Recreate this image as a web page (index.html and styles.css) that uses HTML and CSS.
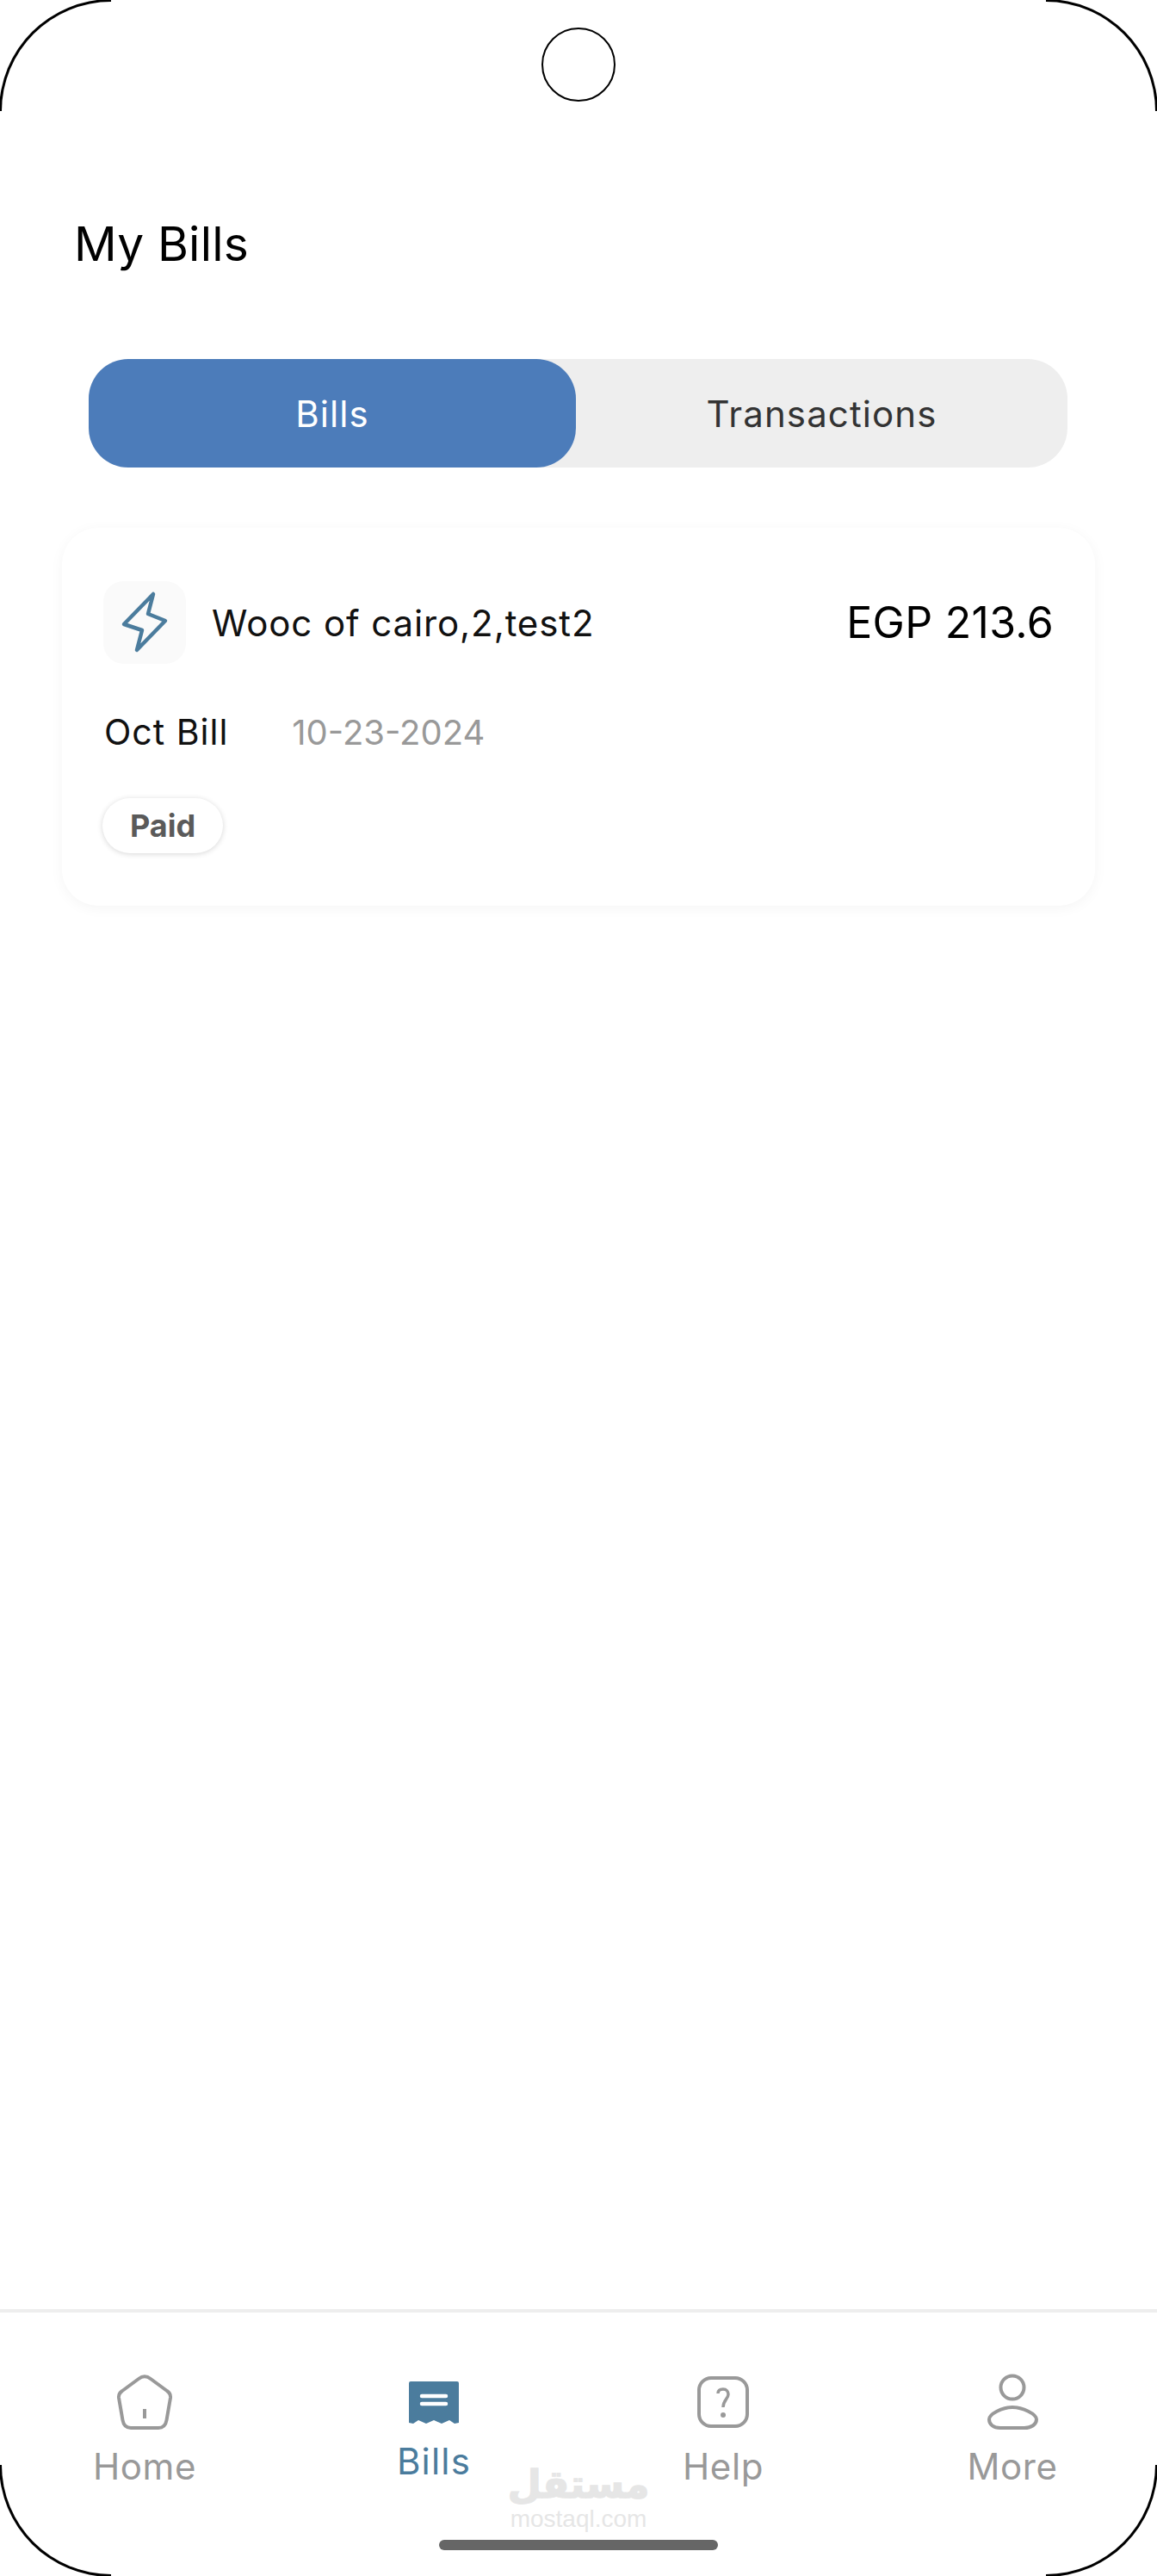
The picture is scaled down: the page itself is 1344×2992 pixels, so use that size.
FILE: index.html
```html
<!DOCTYPE html>
<html lang="en">
<head>
  <meta charset="UTF-8">
  <title>My Bills</title>
  <link rel="stylesheet" href="styles.css">
</head>
<body>

<div class="phone">
  <div class="corner corner-tl"></div>
  <div class="corner corner-tr"></div>
  <div class="corner corner-bl"></div>
  <div class="corner corner-br"></div>
  <div class="camera"></div>

  <main class="content">
    <h1 class="page-title">My Bills</h1>

    <div class="tabs">
      <button class="tab tab-active">Bills</button>
      <button class="tab">Transactions</button>
    </div>

    <section class="card">
      <div class="card-top">
        <div class="bill-icon">
          <svg width="96" height="96" viewBox="0 0 96 96" fill="none" stroke="#4b7c9d" stroke-width="4.5" stroke-linejoin="round">
            <path d="M58 15 L52 38 L72 46 L39 80 L45 57 L24 50 Z"/>
          </svg>
        </div>
        <span class="bill-name">Wooc of cairo,2,test2</span>
        <span class="bill-amount">EGP 213.6</span>
      </div>
      <div class="card-meta">
        <span class="bill-month">Oct Bill</span>
        <span class="bill-date">10-23-2024</span>
      </div>
      <span class="chip">Paid</span>
    </section>
  </main>

  <nav class="bottom-nav">
    <div class="nav-items">
      <a class="nav-item">
        <svg width="72" height="72" viewBox="0 0 72 72" fill="none" stroke="#999" stroke-width="4" stroke-linejoin="round">
          <path d="M29 9 Q36 3.5 43 9 L62 23 Q66.5 26 66 31 L61.5 57 Q60 66 52 66 L20 66 Q12 66 10.5 57 L6 31 Q5.5 26 10 23 Z"/>
          <path d="M36 44 V55"/>
        </svg>
        <span>Home</span>
      </a>
      <a class="nav-item nav-item-active">
        <svg width="72" height="72" viewBox="0 0 72 72">
          <path fill="#4b7c9d" d="M9 12 H63 Q65 12 65 14 V60 L60 61 L54 57 L45 61 L36 57 L27 61 L18 57 L12 61 L7 60 V14 Q7 12 9 12 Z"/>
          <path stroke="#fff" stroke-width="4.5" stroke-linecap="round" d="M22 29 H50 M22 38 H50"/>
        </svg>
        <span>Bills</span>
      </a>
      <a class="nav-item">
        <svg width="72" height="72" viewBox="0 0 72 72" fill="none" stroke="#999" stroke-width="4">
          <rect x="8" y="8" width="56" height="56" rx="14"/>
          <path stroke-width="3.5" d="M30 26 C30 22 33 21 36 21 C40 21 42 24 42 27 C42 32 36 34 36 42"/>
          <circle cx="36" cy="51" r="3" fill="#999" stroke="none"/>
        </svg>
        <span>Help</span>
      </a>
      <a class="nav-item">
        <svg width="72" height="72" viewBox="0 0 72 72" fill="none" stroke="#999" stroke-width="4">
          <circle cx="36" cy="19" r="13.5"/>
          <path d="M36 42 C48 42 64 50 64 56 C64 62 58 66 50 66 H22 C14 66 9 62 9 56 C9 50 24 42 36 42 Z"/>
        </svg>
        <span>More</span>
      </a>
    </div>
    <div class="home-bar"></div>
  </nav>

  <div class="watermark">
    <span class="watermark-ar" lang="ar" dir="rtl">مستقل</span>
    <span class="watermark-en">mostaql.com</span>
  </div>
</div>

</body>
</html>
```

FILE: styles.css
```css
* {
  box-sizing: border-box;
}
body {
  margin: 0;
  background: #fff;
  font-family: "Inter", "Liberation Sans", sans-serif;
}
.phone {
  position: relative;
  width: 1344px;
  height: 2992px;
  display: flex;
  flex-direction: column;
  overflow: hidden;
  background: #fff;
}

/* device frame */
.corner {
  position: absolute;
  width: 130px;
  height: 130px;
  border: 0 solid #000;
}
.corner-tl {
  top: -1px;
  left: -1px;
  border-top-width: 3px;
  border-left-width: 3px;
  border-top-left-radius: 130px;
}
.corner-tr {
  top: -1px;
  right: -1px;
  border-top-width: 3px;
  border-right-width: 3px;
  border-top-right-radius: 130px;
}
.corner-bl {
  bottom: -1px;
  left: -1px;
  border-bottom-width: 3px;
  border-left-width: 3px;
  border-bottom-left-radius: 130px;
}
.corner-br {
  bottom: -1px;
  right: -1px;
  border-bottom-width: 3px;
  border-right-width: 3px;
  border-bottom-right-radius: 130px;
}
.camera {
  position: absolute;
  top: 32px;
  left: 629px;
  width: 86px;
  height: 86px;
  border: 2px solid #000;
  border-radius: 50%;
}

.content {
  flex: 1;
  padding: 251px 72px 0;
}
.page-title {
  margin: 0 0 0 14px;
  font-size: 55px;
  line-height: 64px;
  letter-spacing: 0.2px;
  font-weight: 400;
  color: #000;
}

.tabs {
  display: flex;
  width: 1137px;
  height: 126px;
  margin: 102px 0 0 31px;
  background: #eee;
  border-radius: 46px;
}
.tab {
  flex: 1;
  padding: 0;
  border: none;
  border-radius: 46px;
  background: none;
  font-family: inherit;
  font-size: 42px;
  letter-spacing: 1.1px;
  color: #333;
}
.tab-active {
  flex: none;
  width: 566px;
  background: #4c7cba;
  color: #fff;
}

.card {
  width: 1200px;
  height: 439px;
  margin-top: 70px;
  padding: 62px 48px 0;
  background: #fff;
  border-radius: 42px;
  box-shadow: 0 3px 16px rgba(0, 0, 0, 0.045);
}
.card-top {
  display: flex;
  align-items: center;
}
.bill-icon {
  width: 96px;
  height: 96px;
  border-radius: 24px;
  background: #fafafa;
}
.bill-name {
  margin-left: 30px;
  font-size: 42px;
  letter-spacing: 0.9px;
  color: #111;
}
.bill-amount {
  margin-left: auto;
  font-size: 50px;
  letter-spacing: 0.3px;
  color: #000;
}
.card-meta {
  display: flex;
  align-items: center;
  margin-top: 54px;
  padding-left: 1px;
  font-size: 40px;
}
.bill-month {
  font-size: 41px;
  letter-spacing: 1px;
  color: #111;
}
.bill-date {
  margin-left: 74px;
  color: #999;
}
.chip {
  display: inline-block;
  margin: 52px 0 0 -1px;
  padding: 0 32px;
  height: 64px;
  line-height: 64px;
  border-radius: 32px;
  background: #fff;
  box-shadow: 0 1px 6px rgba(0, 0, 0, 0.16);
  font-size: 36px;
  font-weight: 700;
  color: #5a5a5a;
}

.bottom-nav {
  height: 310px;
  border-top: 4px solid #eee;
}
.nav-items {
  display: grid;
  grid-template-columns: repeat(4, 336px);
  padding-top: 68px;
}
.nav-item {
  display: flex;
  flex-direction: column;
  align-items: center;
  font-size: 42px;
  line-height: 50px;
  letter-spacing: 0.6px;
  color: #999;
}
.nav-item span {
  margin-top: 14px;
}
.nav-item-active {
  letter-spacing: 1.2px;
  color: #4b7c9d;
}
.nav-item-active span {
  margin-top: 8px;
}
.home-bar {
  width: 324px;
  height: 12px;
  margin: 60px auto 0;
  border-radius: 6px;
  background: #666;
}

.watermark {
  position: absolute;
  top: 2860px;
  left: 592px;
  width: 160px;
  display: flex;
  flex-direction: column;
  align-items: center;
  color: #e6e6e6;
}
.watermark-ar {
  font-family: "DejaVu Sans", sans-serif;
  font-size: 45px;
  line-height: 52px;
  font-weight: 700;
  -webkit-text-stroke: 1.5px #e6e6e6;
}
.watermark-en {
  font-family: "Liberation Sans", sans-serif;
  font-size: 28px;
  line-height: 28px;
}
```
